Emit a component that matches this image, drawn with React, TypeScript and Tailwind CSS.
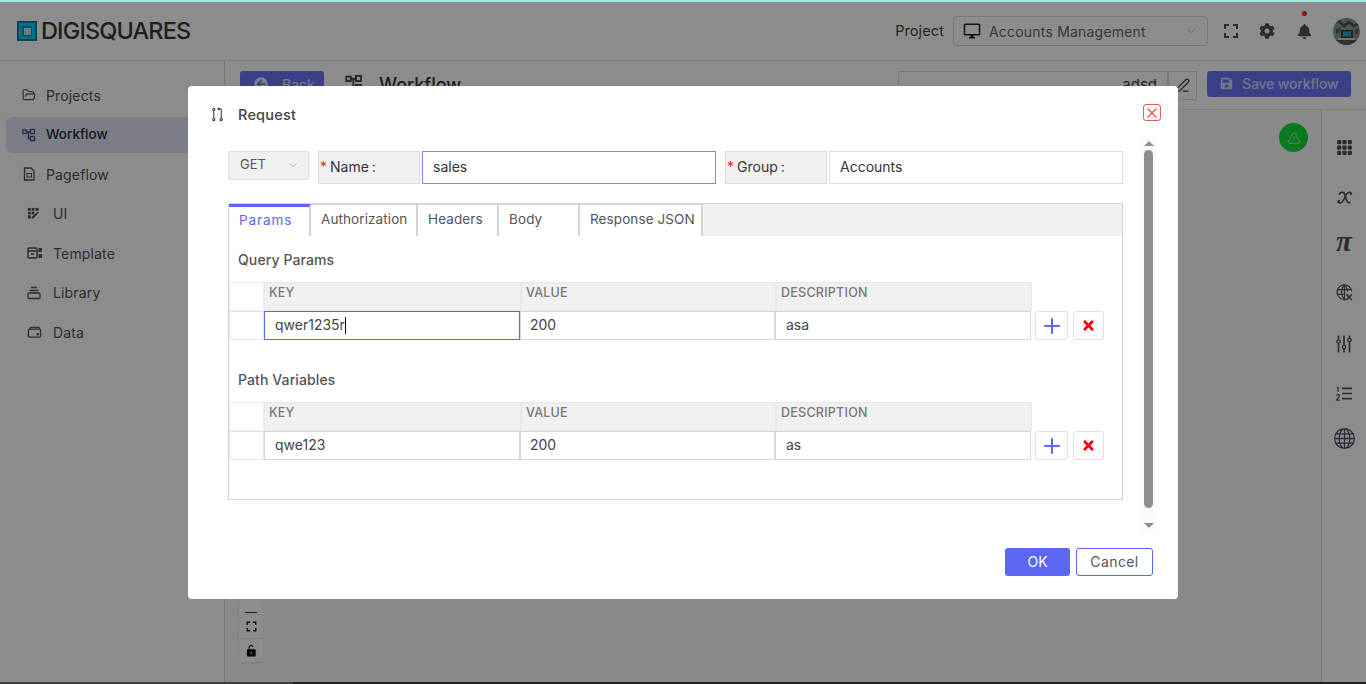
import React from "react";
import { FaBell, FaCog, FaSave, FaArrowCircleLeft, FaTimes } from "react-icons/fa";
import { MdOutlineDesktopWindows, MdFullscreen } from "react-icons/md";
import { BsGrid3X3GapFill, BsGlobe } from "react-icons/bs";
import { ChevronDown, FolderOpen, Plus, TriangleAlert, PenLine, X } from "lucide-react";

const FONT = "font-['Inter','Liberation_Sans',sans-serif]";

const FlowIcon = ({ className = "" }: { className?: string }) => (
  <svg viewBox="0 0 14 14" className={className} fill="none" stroke="currentColor" strokeWidth="1.4">
    <rect x="1" y="2" width="3.5" height="3.5" />
    <rect x="8.5" y="1.5" width="4" height="4" />
    <rect x="8.5" y="8.5" width="4" height="4" />
    <path d="M4.5 3.7H8.5M6.5 3.7V10.5H8.5" />
  </svg>
);
const PageIcon = ({ className = "" }: { className?: string }) => (
  <svg viewBox="0 0 14 14" className={className} fill="none" stroke="currentColor" strokeWidth="1.3">
    <path d="M2.5 1H9L12 4V13H2.5Z" />
    <rect x="5" y="6.5" width="4.5" height="3.5" strokeWidth="1" />
  </svg>
);
const UiIcon = ({ className = "" }: { className?: string }) => (
  <svg viewBox="0 0 14 14" className={className} fill="currentColor">
    <rect x="1" y="1" width="3" height="3" /><rect x="5" y="1" width="3" height="3" /><rect x="9" y="1" width="3.5" height="3" />
    <rect x="1" y="5" width="3" height="3" /><rect x="5" y="5" width="3" height="3" />
    <rect x="1" y="9" width="3" height="3.5" />
    <path d="M13 5.5L7 12.5H5V10.8L11 5.5Z" />
  </svg>
);
const TemplateIcon = ({ className = "" }: { className?: string }) => (
  <svg viewBox="0 0 16 14" className={className} fill="none" stroke="currentColor" strokeWidth="1.4">
    <rect x="1" y="2" width="9" height="10" rx="1" />
    <path d="M1 5H10M4 8H7" />
    <rect x="11.5" y="2" width="3.5" height="4" fill="currentColor" stroke="none" rx="0.6" />
    <rect x="11.5" y="8" width="3.5" height="4" fill="currentColor" stroke="none" rx="0.6" />
  </svg>
);
const LibraryIcon = ({ className = "" }: { className?: string }) => (
  <svg viewBox="0 0 14 14" className={className} fill="none" stroke="currentColor" strokeWidth="1.3">
    <path d="M4 1.5H10M2.5 4.5H11.5" />
    <rect x="1" y="7" width="12" height="5.5" rx="1" />
  </svg>
);
const DataIcon = ({ className = "" }: { className?: string }) => (
  <svg viewBox="0 0 16 14" className={className} fill="none" stroke="currentColor" strokeWidth="1.4">
    <path d="M3 3.5L4 2H12.5L13.5 3.5" />
    <rect x="1.5" y="4" width="13" height="8.5" rx="1.5" />
    <circle cx="11.5" cy="9.5" r="0.7" fill="currentColor" />
  </svg>
);
const RequestIcon = ({ className = "" }: { className?: string }) => (
  <svg viewBox="0 0 14 16" className={className} fill="none" stroke="currentColor" strokeWidth="1.1">
    <circle cx="3" cy="2.5" r="1.2" /><circle cx="3" cy="13.5" r="1.2" /><circle cx="11" cy="13.5" r="1.2" />
    <path d="M3 3.7V12.3M11 12.3V2H7.5M9 0.7L7.3 2L9 3.3" />
  </svg>
);
const ScriptX = ({ className = "" }: { className?: string }) => (
  <svg viewBox="0 0 18 16" className={className} fill="none" stroke="currentColor" strokeLinecap="round">
    <path d="M3.5 4.5C5 1.5 8.5 1.5 9.5 5C10.5 9 10.8 14 14.5 13.5" strokeWidth="1.9" />
    <path d="M16.5 3.5C14 1 11 3.5 9.5 7.5C8 11.5 5.5 15.5 2 13" strokeWidth="1.5" />
    <circle cx="2.8" cy="11.8" r="1.4" fill="currentColor" stroke="none" />
    <circle cx="15.8" cy="4.3" r="1.2" fill="currentColor" stroke="none" />
  </svg>
);
const GlobeX = ({ className = "" }: { className?: string }) => (
  <svg viewBox="0 0 18 18" className={className} fill="none" stroke="currentColor" strokeWidth="1.2">
    <path d="M10.5 16.3A7.8 7.8 0 1 1 16.7 8" />
    <path d="M9 1C5 5 5 12 9 16.5M9 1C11.5 4 12.5 6 12.5 8M1.5 6H16M1.5 11H8M9 1V16.5" />
    <path d="M11 11L16.8 17M16.8 11L11 17" strokeWidth="1.6" />
  </svg>
);
const Sliders = ({ className = "" }: { className?: string }) => (
  <svg viewBox="0 0 16 18" className={className} fill="none" stroke="currentColor" strokeWidth="1.7">
    <path d="M2.5 0.5V4.5M2.5 8.5V17.5M8 0.5V10M8 14V17.5M13.5 0.5V3M13.5 7V17.5" />
    <circle cx="2.5" cy="6.5" r="1.7" strokeWidth="1.3" />
    <circle cx="8" cy="12" r="1.7" strokeWidth="1.3" />
    <circle cx="13.5" cy="5" r="1.7" strokeWidth="1.3" />
  </svg>
);
const NumList = ({ className = "" }: { className?: string }) => (
  <svg viewBox="0 0 18 16" className={className} fill="none" stroke="currentColor" strokeWidth="1.7">
    <path d="M7 2.5H17.5M7 8H17.5M7 13.5H17.5" />
    <path d="M2.7 1V6.3M1.4 2L2.7 1" strokeWidth="1.3" />
    <path d="M0.9 10C1.5 8.8 4.3 9 4.1 10.5C3.9 11.8 1.5 13 1 15H4.5" strokeWidth="1.3" />
  </svg>
);
const OpenLock = ({ className = "" }: { className?: string }) => (
  <svg viewBox="0 0 12 14" className={className}>
    <path d="M3.5 6V3.2C3.5 1.2 6.5 0.8 7.5 2.6" fill="none" stroke="currentColor" strokeWidth="1.2" />
    <rect x="1" y="5.5" width="9.5" height="8" rx="1" fill="currentColor" />
    <circle cx="5.8" cy="9.5" r="1" fill="#fff" />
  </svg>
);
const Avatar = () => (
  <svg viewBox="0 0 27 27" className="w-[27px] h-[27px] rounded-full shrink-0">
    <rect width="27" height="27" fill="#8b9a97" />
    <path d="M0 6L6 3L11 8L16 4L21 8L27 5" stroke="#4b5654" strokeWidth="2.5" fill="none" />
    <path d="M3 11L8 10L6 15L3 16ZM23 10L26 12L24 17L21 15Z" fill="#55605c" />
    <rect x="8" y="12" width="12" height="8" fill="#37464a" />
    <rect x="10" y="13.5" width="8" height="5" fill="#2ea4bd" />
    <rect x="5" y="20" width="17" height="2" fill="#d4d4c4" />
    <rect x="3" y="22" width="21" height="5" fill="#5b5e4f" />
  </svg>
);

const NavItem = ({ icon, label, active, sub }: { icon: React.ReactNode; label: string; active?: boolean; sub?: boolean }) => (
  <div
    className={`flex items-center h-[36px] ${active ? "bg-[#dfe3f3] rounded-l-[6px] ml-[6px] pl-[16px] font-medium text-[#2a2f3a]" : "text-[#555] " + (sub ? "ml-[27px]" : "ml-[22px]")}`}
  >
    <span className={`${sub ? "w-[26px]" : "w-[24px]"} flex items-center text-[#4b5563]`}>{icon}</span>
    <span className={active ? "text-[13.5px]" : "text-[14px] tracking-[0.15px]"}>{label}</span>
  </div>
);

const TabItem = ({ label, w, active }: { label: string; w: string; active?: boolean }) => (
  <div
    className={`${w} h-[32px] flex items-center pl-[10px] bg-white border-r-2 border-[#d4d4d4] text-[13.5px] ${active ? "pb-[3px] border-t-[3px] border-t-[#5b67f1] text-[#5b67f1] tracking-[0.9px]" : "pb-[2px] border-t border-t-[#d4d4d4] text-[#555] tracking-[0.1px]"}`}
  >
    {label}
  </div>
);

const ParamTable = ({ title, k, v, d, focused }: { title: string; k: string; v: string; d: string; focused?: boolean }) => (
  <div>
    <div className="pl-[9px] h-[22px] flex items-center pb-[1px] text-[14px] tracking-[0.1px] text-[#555] font-medium">{title}</div>
    <div className="mt-[11px] flex flex-col">
      <div className="flex h-[29px]">
        <div className="w-[35px] border border-[#ececec] bg-white" />
        <div className="w-[257px] bg-[#f0f0f0] border border-[#e8e8e8] pl-[4px] pt-[1px] text-[12.5px] font-medium text-[#777] tracking-[0.2px]">KEY</div>
        <div className="w-[255px] bg-[#f0f0f0] border border-[#e8e8e8] pl-[4px] pt-[1px] text-[12.5px] font-medium text-[#777] tracking-[0.2px]">VALUE</div>
        <div className="w-[256px] bg-[#f0f0f0] border border-[#e8e8e8] pl-[4px] pt-[1px] text-[12.5px] font-medium text-[#777] tracking-[0.25px]">DESCRIPTION</div>
      </div>
      <div className="flex h-[29px]">
        <div className="w-[35px] border border-[#e4e4e4] bg-white" />
        <div className={`w-[256px] flex items-center pl-[10px] pb-[2px] text-[14px] text-[#444] border ${focused ? "border-[#5b67f1]" : "border-[#d9d9d9]"}`}>
          {k}{focused && <span className="inline-block w-px h-[17px] bg-black mt-[2px]" />}
        </div>
        <div className="w-[255px] flex items-center pl-[9px] pb-[2px] text-[14px] text-[#444] border border-[#d9d9d9]">{v}</div>
        <div className="w-[256px] flex items-center pl-[10px] pb-[2px] text-[14px] text-[#444] border border-[#d9d9d9]">{d}</div>
        <div className="ml-[4px] w-[33px] flex items-center justify-center border border-[#e0e0e0] rounded-[3px]">
          <Plus className="w-[24px] h-[24px] text-[#5b67f1]" strokeWidth={2} />
        </div>
        <div className="ml-[5px] w-[31px] flex items-center justify-center border border-[#e0e0e0] rounded-[3px]">
          <FaTimes className="w-[15px] h-[15px] text-[#f5000f]" />
        </div>
      </div>
    </div>
  </div>
);

const RailItem = ({ children, h }: { children: React.ReactNode; h: string }) => (
  <div className={`${h} flex items-center justify-center text-[#4b5563]`}>{children}</div>
);

export default function App() {
  return (
    <div className={`relative w-[1366px] h-[684px] overflow-hidden bg-white ${FONT}`}>
      <div className="h-full flex flex-col">
        <div className="h-[2px] bg-[#a7e6e6]" />
        <header className="h-[59px] shrink-0 flex items-center border-b border-[#e2e2e2] pl-[17px] pr-[6px]">
          <div className="w-[20px] h-[20px] bg-[#1479a3] p-[2px]">
            <div className="w-full h-full bg-[#15cdf0] p-[3px]">
              <div className="w-full h-full bg-[#168cb8] p-[1.5px]">
                <div className="w-full h-full bg-[#b4e6f4]" />
              </div>
            </div>
          </div>
          <span className="ml-[4px] text-[23.5px] font-medium tracking-[-0.85px] text-[#3a3a3a]">DIGISQUARES</span>
          <div className="flex-1" />
          <span className="text-[14.5px] tracking-[0.1px] text-[#444]">Project</span>
          <div className="ml-[9px] w-[255px] h-[30px] flex items-center border border-[#d9d9d9] rounded-[4px] pl-[9px] pr-[9px] text-[#666]">
            <MdOutlineDesktopWindows className="w-[18px] h-[18px] text-[#222]" />
            <span className="ml-[8px] text-[14px] tracking-[0.2px] flex-1">Accounts Management</span>
            <ChevronDown className="w-[14px] h-[14px] text-[#bbb]" strokeWidth={1.5} />
          </div>
          <MdFullscreen className="ml-[11px] w-[24px] h-[24px] text-[#4b5563]" />
          <FaCog className="ml-[16px] w-[16px] h-[16px] text-[#4b5563]" />
          <div className="relative ml-[22px] text-[#4b5563]">
            <FaBell className="w-[15px] h-[15px]" />
            <span className="absolute left-[5px] -top-[13px] w-[5px] h-[5px] rounded-full bg-[#ef1c1c]" />
          </div>
          <div className="ml-[21px]"><Avatar /></div>
        </header>
        <div className="flex-1 flex min-h-0">
          <aside className="w-[225px] shrink-0 border-r border-[#d8d8d8] pt-[16px] flex flex-col gap-[3.5px]">
            <NavItem icon={<FolderOpen className="w-[14px] h-[14px]" />} label="Projects" />
            <NavItem active icon={<FlowIcon className="w-[14px] h-[14px] text-[#4a5490]" />} label="Workflow" />
            <NavItem icon={<PageIcon className="w-[14px] h-[14px]" />} label="Pageflow" />
            <NavItem sub icon={<UiIcon className="w-[13px] h-[13px]" />} label="UI" />
            <NavItem sub icon={<TemplateIcon className="w-[16px] h-[14px]" />} label="Template" />
            <NavItem sub icon={<LibraryIcon className="w-[14px] h-[14px]" />} label="Library" />
            <NavItem sub icon={<DataIcon className="w-[15px] h-[14px]" />} label="Data" />
          </aside>
          <main className="flex-1 min-w-0 flex flex-col">
            <div className="h-[48px] shrink-0 flex items-start pt-[10px] pl-[15px] pr-[15px]">
              <div className="w-[84px] h-[26px] flex items-center pl-[14px] bg-[#6a76f7] rounded-[3px] text-white/80">
                <FaArrowCircleLeft className="w-[14px] h-[14px]" />
                <span className="ml-[14px] text-[14px]">Back</span>
              </div>
              <FlowIcon className="ml-[21px] mt-[3px] w-[18px] h-[18px] text-[#444]" />
              <span className="ml-[16px] text-[18px] font-medium text-[#333]">Workflow</span>
              <div className="flex-1" />
              <div className="w-[270px] h-[29px] border border-[#d9d9d9] flex items-center justify-end pr-[10px] text-[15px] text-[#444]">adsd</div>
              <div className="w-[29px] h-[29px] border border-[#d9d9d9] flex items-center justify-center">
                <PenLine className="w-[15px] h-[15px] text-[#444]" />
              </div>
              <div className="ml-[10px] w-[144px] h-[26px] flex items-center pl-[13px] pb-[1px] bg-[#6a76f7] rounded-[3px] text-white/70">
                <FaSave className="w-[13px] h-[13px]" />
                <span className="ml-[9px] text-[14px] font-medium tracking-[-0.15px]">Save workflow</span>
              </div>
            </div>
            <div className="flex-1 flex min-h-0 border-t border-[#e8e8e8]">
              <div className="relative flex-1 bg-[#fcfcfc]">
                <div className="absolute right-[13px] top-[13px] w-[29px] h-[29px] rounded-full bg-[#0fdc3a] flex items-center justify-center">
                  <TriangleAlert className="w-[14px] h-[14px] text-white/80" strokeWidth={1.3} />
                </div>
                <div className="absolute left-[14px] bottom-[20px] w-[24px] flex flex-col bg-white shadow-sm">
                  <div className="h-[14px] flex items-end justify-center pb-[1px]"><div className="w-[12px] h-px bg-[#333]" /></div>
                  <div className="h-[24px] flex items-center justify-center border-t border-[#eee]"><MdFullscreen className="w-[17px] h-[17px] text-[#222]" /></div>
                  <div className="h-[24px] flex items-center justify-center border-t border-[#eee]"><OpenLock className="w-[11px] h-[13px] text-black" /></div>
                </div>
              </div>
              <div className="w-[45px] shrink-0 border-l border-[#d8d8d8] pt-[12px] flex flex-col">
                <RailItem h="h-[50px]"><BsGrid3X3GapFill className="w-[17px] h-[17px]" /></RailItem>
                <RailItem h="h-[50px]"><ScriptX className="w-[17px] h-[15px]" /></RailItem>
                <RailItem h="h-[42px]"><span className="font-['Liberation_Serif',serif] italic font-bold text-[29px] leading-none pb-[3px]">π</span></RailItem>
                <RailItem h="h-[56px]"><GlobeX className="w-[17px] h-[17px]" /></RailItem>
                <RailItem h="h-[48px]"><Sliders className="w-[16px] h-[18px]" /></RailItem>
                <RailItem h="h-[50px]"><NumList className="w-[18px] h-[15px]" /></RailItem>
                <RailItem h="h-[40px]"><BsGlobe className="w-[21px] h-[21px]" /></RailItem>
              </div>
            </div>
          </main>
        </div>
        <div className="h-[2px] shrink-0 flex">
          <div className="w-[293px] bg-[#737373]" />
          <div className="flex-1 bg-[#363636]" />
        </div>
      </div>

      {/* Overlay */}
      <div className="absolute inset-x-0 top-[2px] bottom-0 bg-black/45" />

      {/* Modal */}
      <div className="absolute left-[188px] top-[86px] w-[990px] h-[513px] bg-white rounded-[4px] flex flex-col">
        <div className="h-[65px] shrink-0 flex items-start pt-[18px] pl-[23px] pr-[17px]">
          <RequestIcon className="w-[13px] h-[15px] mt-[3px] text-[#333]" />
          <span className="ml-[14px] text-[14.5px] tracking-[0.2px] font-medium text-[#444]">Request</span>
          <div className="flex-1" />
          <div className="w-[18px] h-[17px] border border-[#f25555] rounded-[3px] flex items-center justify-center">
            <X className="w-[16px] h-[16px] text-[#f25555]" strokeWidth={2.2} />
          </div>
        </div>
        <div className="flex-1 flex min-h-0 pl-[40px]">
          <div className="w-[895px] shrink-0">
            <div className="flex items-start">
              <div className="w-[81px] h-[29px] bg-[#f1f1f1] border border-[#dcdcdc] rounded-[2px] flex items-center pl-[11px] pr-[8px] pb-[1px] text-[13px] text-[#555]">
                <span className="flex-1">GET</span>
                <ChevronDown className="w-[14px] h-[14px] text-[#aaa]" strokeWidth={1.5} />
              </div>
              <div className="ml-[9px] w-[102px] h-[33px] bg-[#f1f1f1] border border-[#dcdcdc] flex items-center pl-[1px] pb-[2px] text-[14px] text-[#333]">
                <span className="text-[#ef1c1c] mr-[3px]">*</span>Name<span className="ml-[3px]">:</span>
              </div>
              <div className="ml-[2px] w-[294px] h-[33px] border border-[#7b8cf0] flex items-center pl-[10px] pb-[2px] text-[14px] text-[#333]">sales</div>
              <div className="ml-[9px] w-[102px] h-[33px] bg-[#f1f1f1] border border-[#dcdcdc] flex items-center pl-[1px] pb-[2px] text-[14px] text-[#333]">
                <span className="text-[#ef1c1c] mr-[3px]">*</span>Group<span className="ml-[3px]">:</span>
              </div>
              <div className="ml-[2px] w-[294px] h-[33px] border border-[#dcdcdc] flex items-center pl-[10px] pb-[2px] text-[14px] text-[#333]">Accounts</div>
            </div>
            <div className="mt-[19px] h-[297px] border border-[#d4d4d4]">
              <div className="h-[32px] bg-[#f2f1f0] flex">
                <TabItem active w="w-[82px]" label="Params" />
                <TabItem w="w-[107px]" label="Authorization" />
                <TabItem w="w-[81px]" label="Headers" />
                <TabItem w="w-[81px]" label="Body" />
                <TabItem w="w-[123px]" label="Response JSON" />
              </div>
              <div className="pt-[13px]">
                <ParamTable focused title="Query Params" k="qwer1235r" v="200" d="asa" />
                <div className="h-[29px]" />
                <ParamTable title="Path Variables" k="qwe123" v="200" d="as" />
              </div>
            </div>
          </div>
          <div className="ml-[18px] w-[15px] h-[396px] -mt-[15px] bg-[#fafafa] flex flex-col items-center">
            <div className="h-[15px] shrink-0 flex items-center justify-center">
              <div className="w-0 h-0 border-x-[5px] border-x-transparent border-b-[5px] border-b-[#8f8f8f]" />
            </div>
            <div className="w-[9px] h-[358px] mt-[-1px] rounded-full bg-[#8f8f8f]" />
            <div className="flex-1 flex items-end justify-center pb-[4px]">
              <div className="w-0 h-0 border-x-[5px] border-x-transparent border-t-[5px] border-t-[#8f8f8f]" />
            </div>
          </div>
        </div>
        <div className="h-[51px] shrink-0 flex items-start justify-end pr-[25px]">
          <div className="w-[65px] h-[28px] pb-[2px] bg-[#5b67f1] rounded-[3px] flex items-center justify-center text-white text-[14px]">OK</div>
          <div className="ml-[6px] w-[77px] h-[28px] pb-[2px] border border-[#5b67f1] rounded-[3px] flex items-center justify-center text-[#555] text-[14px] tracking-[0.4px]">Cancel</div>
        </div>
      </div>
    </div>
  );
}
